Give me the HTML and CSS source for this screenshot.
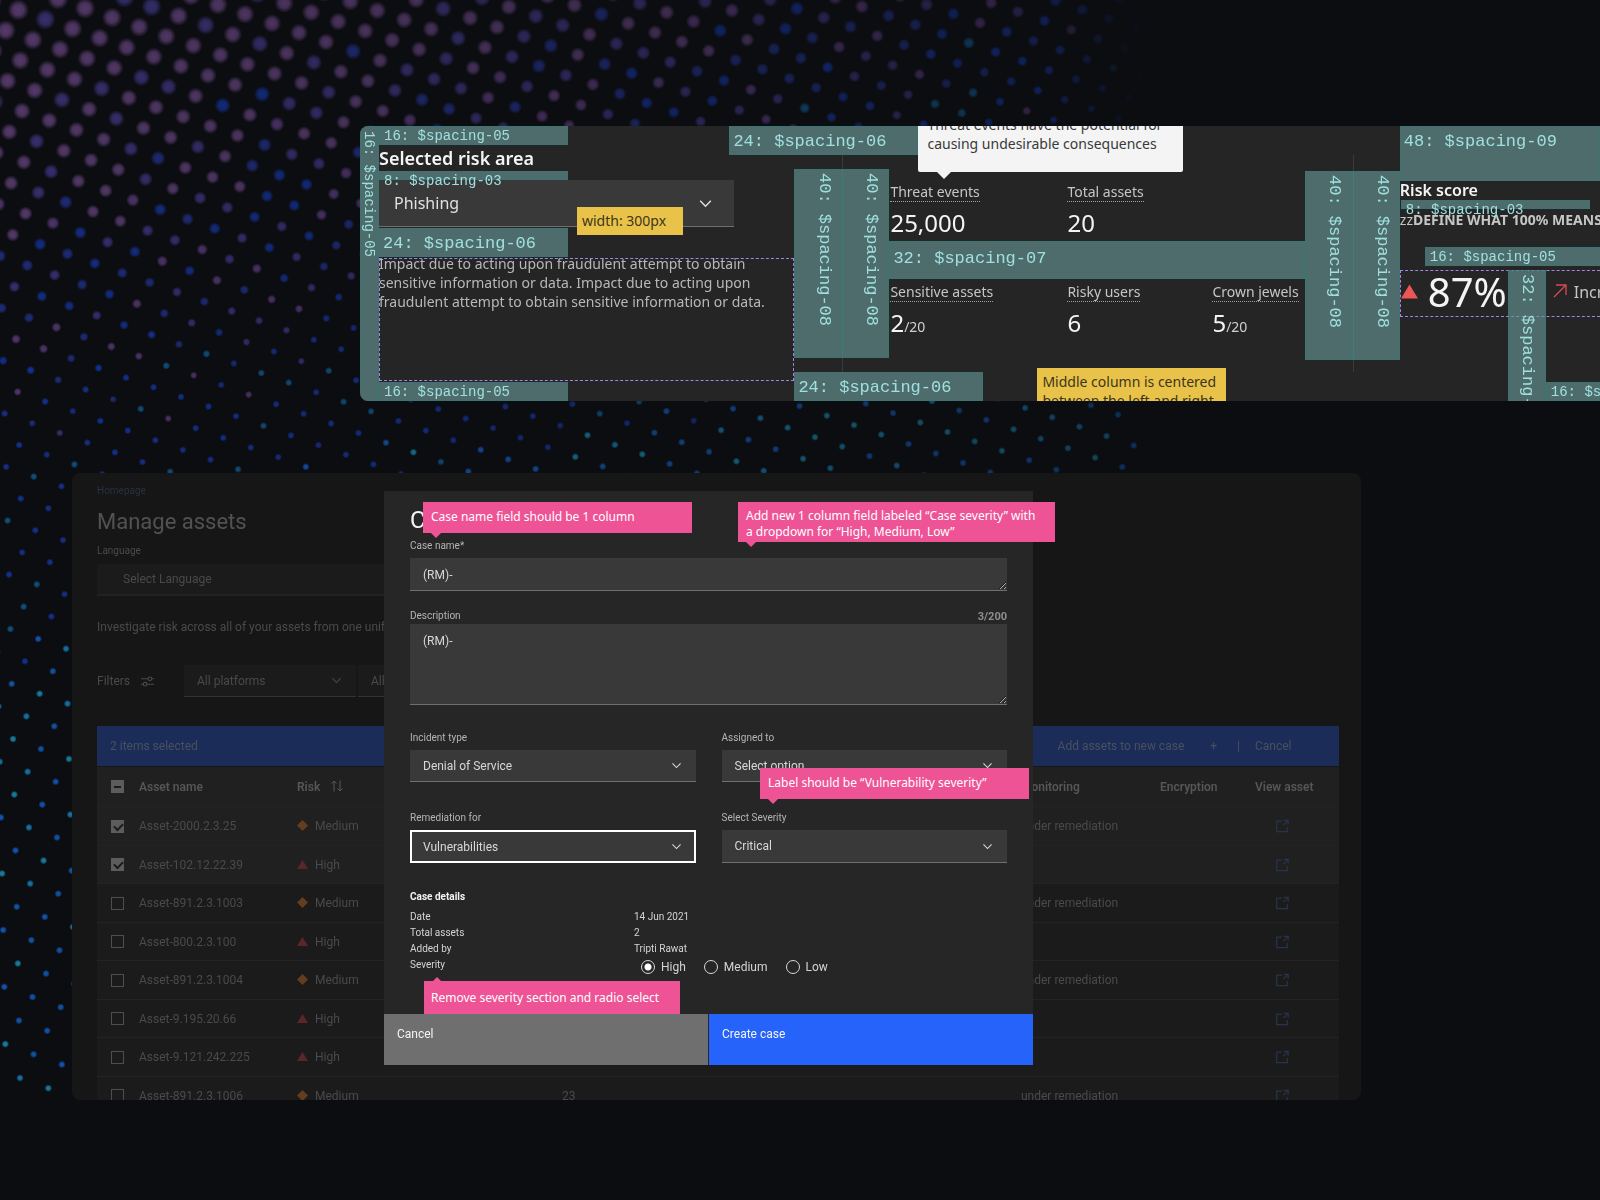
FILE: index.html
```html
<!DOCTYPE html>
<html lang="en">
<head>
<meta charset="utf-8">
<title>Risk dashboard review</title>
<link rel="stylesheet" href="styles.css">
</head>
<body>
<canvas class="dots" id="dots" aria-hidden="true"></canvas>

<svg class="sprite" aria-hidden="true">
  <symbol id="chevron" viewBox="0 0 16 16"><path d="M3 5.5 8 10.5 13 5.5" fill="none" stroke="currentColor" stroke-width="1.4"/></symbol>
  <symbol id="launch" viewBox="0 0 16 16"><path d="M8 2.5H2v12h12V9M10 1.500h5v5M15 1.500 9.500 7" fill="none" stroke="currentColor" stroke-width="1.4"/></symbol>
  <symbol id="diamond" viewBox="0 0 12 12"><path d="M6 0 12 6 6 12 0 6Z" fill="currentColor"/></symbol>
  <symbol id="triangle" viewBox="0 0 12 12"><path d="M6 1 12 11H0Z" fill="currentColor"/></symbol>
</svg>

<main class="page">
  <section class="spec" aria-label="Spacing specification">
    <div class="space rail">16: $spacing-05</div>

    <div class="risk-area">
      <div class="space s16">16: $spacing-05</div>
      <h2 class="area-title">Selected risk area</h2>
      <div class="space s8">8: $spacing-03</div>
      <div class="dropdown big">
        <select aria-label="Risk area"><option>Phishing</option></select>
        <svg class="chev"><use href="#chevron"/></svg>
        <span class="note width-note">width: 300px</span>
      </div>
      <div class="space s24">24: $spacing-06</div>
      <p class="impact">Impact due to acting upon fraudulent attempt to obtain<br>sensitive information or data. Impact due to acting upon<br>fraudulent attempt to obtain sensitive information or data.</p>
      <div class="space s16">16: $spacing-05</div>
    </div>

    <div class="gutter">
      <div class="space s24 over-left">24: $spacing-06</div>
      <div class="pair">
        <div class="space s40">40: $spacing-08</div>
        <div class="space s40">40: $spacing-08</div>
      </div>
      <div class="space s24 wide">24: $spacing-06</div>
    </div>

    <div class="metrics">
      <div class="tooltip" role="tooltip">Threat events have the potential for<br>causing undesirable consequences</div>
      <dl class="stats">
        <div><dt><span>Threat events</span></dt><dd>25,000</dd></div>
        <div><dt><span>Total assets</span></dt><dd>20</dd></div>
      </dl>
      <div class="space s32">32: $spacing-07</div>
      <dl class="stats">
        <div><dt><span>Sensitive assets</span></dt><dd>2<small>/20</small></dd></div>
        <div><dt><span>Risky users</span></dt><dd>6</dd></div>
        <div><dt><span>Crown jewels</span></dt><dd>5<small>/20</small></dd></div>
      </dl>
      <p class="note column-note">Middle column is centered<br>between the left and right</p>
    </div>

    <div class="gutter second">
      <div class="pair">
        <div class="space s40">40: $spacing-08</div>
        <div class="space s40">40: $spacing-08</div>
      </div>
    </div>

    <div class="score">
      <div class="space s48">48: $spacing-09</div>
      <h2 class="score-title">Risk score</h2>
      <div class="space s8">8: $spacing-03</div>
      <p class="define">zz<b>DEFINE WHAT 100% MEANS</b></p>
      <div class="space s16 indent">16: $spacing-05</div>
      <div class="score-row">
        <svg class="alert"><use href="#triangle"/></svg>
        <strong class="percent">87%</strong>
        <svg class="trend" viewBox="0 0 14 14"><path d="M1 13 12.500 1.500M3 1h10v10" fill="none" stroke="currentColor" stroke-width="1.300"/></svg>
        <span class="trend-text">Increased</span>
        <div class="space s32v">32: $spacing-07</div>
      </div>
      <div class="space s16 last">16: $spacing-05</div>
    </div>
  </section>

  <section class="window" aria-label="Manage assets">
    <div class="assets">
      <a class="crumb" href="#">Homepage</a>
      <h1 class="assets-title">Manage assets</h1>
      <label class="lang-label" for="lang">Language</label>
      <div class="dropdown lang"><select id="lang"><option>Select Language</option></select></div>
      <p class="intro">Investigate risk across all of your assets from one unified view</p>
      <div class="filters">
        <span class="filters-label">Filters</span>
        <svg class="sliders" viewBox="0 0 12 12"><g fill="none" stroke="currentColor"><path d="M0 3.500H6.500M10 3.500H12M0 8.500H2M5.500 8.500H12"/><circle cx="8.200" cy="3.500" r="1.700"/><circle cx="3.800" cy="8.500" r="1.700"/></g></svg>
        <div class="dropdown filter"><select aria-label="Platforms"><option>All platforms</option></select><svg class="chev"><use href="#chevron"/></svg></div>
        <div class="dropdown filter"><select aria-label="More filters"><option>All</option></select></div>
      </div>
      <div class="batch">
        <span class="batch-count">2 items selected</span>
        <button type="button">Add assets to new case</button>
        <span class="plus">+</span>
        <span class="bar">|</span>
        <button type="button">Cancel</button>
      </div>
      <table class="asset-table">
        <colgroup><col class="c-check"><col class="c-name"><col class="c-risk"><col><col class="c-mon"><col class="c-enc"><col class="c-view"></colgroup>
        <thead>
          <tr>
            <th><input type="checkbox" class="some" aria-label="Select all"></th>
            <th>Asset name</th>
            <th>Risk <svg class="sort" viewBox="0 0 12 12"><path d="M3 11.500V1M.5 3.500 3 1 5.500 3.500M9 .5V11M6.500 8.500 9 11 11.500 8.500" fill="none" stroke="currentColor"/></svg></th>
            <th></th><th>Monitoring</th><th>Encryption</th><th>View asset</th>
          </tr>
        </thead>
        <tbody>
          <tr class="picked"><td><input type="checkbox" checked aria-label="Asset-2000.2.3.25"></td><td>Asset-2000.2.3.25</td><td class="medium"><svg><use href="#diamond"/></svg>Medium</td><td></td><td>under remediation</td><td></td><td><a href="#" aria-label="View asset"><svg><use href="#launch"/></svg></a></td></tr>
          <tr class="picked"><td><input type="checkbox" checked aria-label="Asset-102.12.22.39"></td><td>Asset-102.12.22.39</td><td class="high"><svg><use href="#triangle"/></svg>High</td><td></td><td></td><td></td><td><a href="#" aria-label="View asset"><svg><use href="#launch"/></svg></a></td></tr>
          <tr><td><input type="checkbox" aria-label="Asset-891.2.3.1003"></td><td>Asset-891.2.3.1003</td><td class="medium"><svg><use href="#diamond"/></svg>Medium</td><td></td><td>under remediation</td><td></td><td><a href="#" aria-label="View asset"><svg><use href="#launch"/></svg></a></td></tr>
          <tr><td><input type="checkbox" aria-label="Asset-800.2.3.100"></td><td>Asset-800.2.3.100</td><td class="high"><svg><use href="#triangle"/></svg>High</td><td></td><td></td><td></td><td><a href="#" aria-label="View asset"><svg><use href="#launch"/></svg></a></td></tr>
          <tr><td><input type="checkbox" aria-label="Asset-891.2.3.1004"></td><td>Asset-891.2.3.1004</td><td class="medium"><svg><use href="#diamond"/></svg>Medium</td><td></td><td>under remediation</td><td></td><td><a href="#" aria-label="View asset"><svg><use href="#launch"/></svg></a></td></tr>
          <tr><td><input type="checkbox" aria-label="Asset-9.195.20.66"></td><td>Asset-9.195.20.66</td><td class="high"><svg><use href="#triangle"/></svg>High</td><td></td><td></td><td></td><td><a href="#" aria-label="View asset"><svg><use href="#launch"/></svg></a></td></tr>
          <tr><td><input type="checkbox" aria-label="Asset-9.121.242.225"></td><td>Asset-9.121.242.225</td><td class="high"><svg><use href="#triangle"/></svg>High</td><td></td><td></td><td></td><td><a href="#" aria-label="View asset"><svg><use href="#launch"/></svg></a></td></tr>
          <tr><td><input type="checkbox" aria-label="Asset-891.2.3.1006"></td><td>Asset-891.2.3.1006</td><td class="medium"><svg><use href="#diamond"/></svg>Medium</td><td>23</td><td>under remediation</td><td></td><td><a href="#" aria-label="View asset"><svg><use href="#launch"/></svg></a></td></tr>
        </tbody>
      </table>
    </div>

    <div class="overlay">
      <form class="modal" role="dialog" aria-label="Create case">
        <div class="modal-body">
          <h2 class="modal-title">Create case</h2>
          <label class="label" for="case-name">Case name*</label>
          <textarea id="case-name" class="area short">(RM)-</textarea>
          <div class="label-row"><label class="label" for="desc">Description</label><span class="counter">3/200</span></div>
          <textarea id="desc" class="area tall">(RM)-</textarea>
          <div class="fields">
            <div class="field">
              <label class="label" for="incident">Incident type</label>
              <div class="dropdown"><select id="incident"><option>Denial of Service</option></select><svg class="chev"><use href="#chevron"/></svg></div>
            </div>
            <div class="field">
              <label class="label" for="assigned">Assigned to</label>
              <div class="dropdown"><select id="assigned"><option>Select option</option></select><svg class="chev"><use href="#chevron"/></svg></div>
            </div>
            <div class="field">
              <label class="label" for="remed">Remediation for</label>
              <div class="dropdown focused"><select id="remed"><option>Vulnerabilities</option></select><svg class="chev"><use href="#chevron"/></svg></div>
            </div>
            <div class="field">
              <label class="label" for="sev">Select Severity</label>
              <div class="dropdown"><select id="sev"><option>Critical</option></select><svg class="chev"><use href="#chevron"/></svg></div>
            </div>
          </div>
          <h3 class="details-title">Case details</h3>
          <dl class="details">
            <dt>Date</dt><dd>14 Jun 2021</dd>
            <dt>Total assets</dt><dd>2</dd>
            <dt>Added by</dt><dd>Tripti Rawat</dd>
            <dt>Severity</dt>
            <dd class="radios">
              <label><input type="radio" name="s" checked>High</label>
              <label><input type="radio" name="s">Medium</label>
              <label><input type="radio" name="s">Low</label>
            </dd>
          </dl>
        </div>
        <div class="actions">
          <button type="button" class="cancel">Cancel</button>
          <button type="button" class="create">Create case</button>
        </div>
        <p class="callout one">Case name field should be 1 column</p>
        <p class="callout two">Add new 1 column field labeled “Case severity” with<br>a dropdown for “High, Medium, Low”</p>
        <p class="callout three">Label should be “Vulnerability severity”</p>
        <p class="callout four">Remove severity section and radio select</p>
      </form>
    </div>
  </section>
</main>
<script src="script.js"></script>
</body>
</html>
```
FILE: styles.css
```css
* { box-sizing: border-box; }
body {
  margin: 0;
  min-height: 100vh;
  background: #0c0d11;
  color: #f4f4f4;
  font: 12px/16px "Noto Sans", sans-serif;
  overflow-x: hidden;
}
h1, h2, h3, p, dl, dd { margin: 0; }
button, select, textarea { font: inherit; color: inherit; }
.sprite { display: none; }
.dots { position: absolute; left: 0; top: 0; z-index: -1; }
.page { padding-top: 126px; }

/* spacing blocks */
.space {
  flex: none;
  padding-left: 4px;
  background: rgba(102, 146, 146, .65);
  border: 1px dotted rgba(30, 130, 130, .7);
  color: #9fe0de;
  font-family: "Liberation Mono", monospace;
  font-size: 14px;
  line-height: 18px;
  white-space: nowrap;
}
.s16, .s24, .s8 { width: 189px; }
.s16 { height: 19px; }
.s8 { height: 9px; position: relative; z-index: 1; }
.s24, .s32, .s48 { padding-left: 3px; font-size: 17px; }
.s24 { height: 29px; line-height: 29px; }

.spec {
  display: flex;
  height: 275px;
  margin-left: 360px;
  border-radius: 8px 0 0 8px;
  background: #252525;
  overflow: hidden;
}
.rail, .s40, .s32v { writing-mode: vertical-rl; padding: 4px 0 0; }
.rail { width: 19px; }
.risk-area { display: flex; flex-direction: column; flex: 415 0 0; min-width: 0; }
.area-title { font-size: 18px; line-height: 26px; font-weight: 600; white-space: nowrap; }
.risk-area .s24 { margin-top: 1px; }

.dropdown {
  position: relative;
  display: flex;
  align-items: center;
  height: 32px;
  background: #393939;
  border-bottom: 1px solid #6f6f6f;
}
.dropdown select {
  appearance: none;
  width: 100%;
  height: 100%;
  padding: 0 13px;
  border: 0;
  background: none;
  outline: 0;
}
.chev { position: absolute; right: 13px; width: 13px; height: 13px; pointer-events: none; }
.big { width: 355px; height: 47px; flex: none; font-size: 16px; line-height: 24px; color: #e0e0e0; }
.big select { padding: 0 15px; }
.big .chev { right: 20px; width: 17px; height: 17px; }
.note { background: #e9c349; color: #3d351d; font-size: 14px; padding: 4px 5px; line-height: 20px; white-space: nowrap; }
.width-note { position: absolute; left: 198px; top: 27px; width: 106px; z-index: 1; }
.impact {
  position: relative;
  height: 127px;
  flex: none;
  margin: -3px 0 1px;
  color: #b8b8b8;
  font-size: 14px;
  line-height: 19px;
  white-space: nowrap;
}
.impact::before { content: ""; position: absolute; inset: 4px 0 0; border: 1px dashed #a583e6; }

.gutter { position: relative; flex: none; width: 95px; padding-top: 43px; background: linear-gradient(#3a3a3a, #3a3a3a) 48px 29px / 1px 217px no-repeat; }
.pair { display: flex; height: 189px; }
.s40 { flex: 1; padding: 3px 7px 0 0; font-size: 17px; line-height: 19px; }
.over-left { position: absolute; left: -65px; top: 0; }
.wide { margin-top: 14px; }
.second { padding-top: 45px; }

.metrics { position: relative; flex: 415 0 0; min-width: 0; padding-top: 55px; }
.tooltip {
  position: absolute;
  left: 29px;
  top: -11px;
  width: 265px;
  height: 57px;
  padding: 0 9px;
  border-radius: 0 0 2px 2px;
  background: #f4f4f4;
  color: #393939;
  font-size: 14px;
  line-height: 19px;
  white-space: nowrap;
}
.tooltip::after { content: ""; position: absolute; left: 19px; top: 57px; border: 7px solid transparent; border-top-color: #f4f4f4; border-bottom: 0; }
.stats { display: grid; grid-template-columns: 177px 145px 1fr; padding-left: 1px; }
.stats dt { font-size: 14px; line-height: 21px; height: 21px; color: #c6c6c6; white-space: nowrap; }
.stats dt span { display: inline-block; height: 21px; border-bottom: 1px dotted #a0a0a0; }
.stats dd { font-size: 24px; line-height: 32px; height: 39px; padding-top: 5px; color: #f4f4f4; }
.stats small { font-size: 14px; color: #d0d0d0; }
.s32 { height: 38px; line-height: 34px; margin-bottom: 2px; }
.column-note { position: absolute; left: 148px; top: 242px; width: 189px; height: 48px; line-height: 19px; }

.score { position: relative; flex: 200 0 0; min-width: 0; overflow: hidden; }
.s48 { height: 55px; line-height: 29px; }
.score-title { font-size: 16px; line-height: 19px; font-weight: 600; }
.score .s8 { margin-left: 1px; }
.define { font-size: 14px; line-height: 22px; height: 38px; color: #c6c6c6; white-space: nowrap; }
.indent { margin-left: 25px; }
.score-row {
  position: relative;
  display: flex;
  align-items: center;
  height: 47px;
  margin-top: 4px;
  border: 1px dashed #a583e6;
  border-right: 0;
  white-space: nowrap;
}
.alert { width: 17px; height: 17px; margin-bottom: 5px; color: #ee5557; flex: none; }
.percent { width: 135px; padding: 0 0 4px 10px; font-size: 40px; line-height: 45px; font-weight: 400; flex: none; }
.trend { width: 14px; height: 14px; margin-bottom: 5px; color: #da4a50; flex: none; }
.trend-text { margin-left: 7px; padding-bottom: 4px; font-size: 16px; color: #c6c6c6; }
.s32v { position: absolute; left: 107px; top: -1px; width: 38px; height: 140px; padding: 3px 8px 0 0; font-size: 17px; line-height: 19px; }
.last { margin: 65px 0 0 146px; }

/* application window */
.window {
  position: relative;
  height: 627px;
  margin: 72px 239px 0 72px;
  border-radius: 8px;
  background: #161616;
  overflow: hidden;
  font-family: Roboto, sans-serif;
}
.assets { padding: 10px 22px 0 25px; color: #4a4a4a; }
.assets .dropdown { background: #1b1b1b; border-color: #333; }
.crumb { display: block; color: #283142; text-decoration: none; font-size: 10px; }
.assets-title { margin-top: 7px; font-size: 22px; line-height: 32px; font-weight: 400; color: #525252; }
.lang-label { display: block; margin-top: 5px; font-size: 10px; }
.assets .lang { width: 50%; margin-top: 5px; height: 32px; border-bottom: 2px solid #222; }
.lang select { padding-left: 26px; }
.intro { margin-top: 23px; }
.filters { display: flex; align-items: center; height: 32px; margin-top: 30px; }
.filters-label { width: 44px; }
.sliders { width: 13px; height: 13px; margin-right: 30px; }
.filter { width: 172px; margin-right: 2px; }
.batch { display: flex; align-items: center; height: 40px; margin: 29px 0 1px; padding: 0 49px 0 13px; background: #1a2c57; color: #49515f; }
.batch button { padding: 0; border: 0; background: none; }
.batch button:last-child { width: 35px; text-align: left; white-space: nowrap; }
.batch-count { flex: 1; }
.plus { margin: 0 20px 0 26px; }
.bar { margin-right: 15px; }

.asset-table { width: 100%; table-layout: fixed; border-collapse: collapse; background: #1b1b1b; }
.asset-table tr { height: 39px; border-bottom: 1px solid #232323; }
.asset-table tbody tr:nth-child(even) { height: 38px; }
.asset-table thead, .picked { background: #202020; }
.asset-table th { color: #565656; font-weight: 600; }
.asset-table th, .asset-table td { padding: 1px 0 0; text-align: left; white-space: nowrap; }
.asset-table input {
  appearance: none;
  display: block;
  position: relative;
  width: 13px;
  height: 13px;
  margin: 0 0 0 14px;
  border: 1px solid #4e4e4e;
}
.asset-table input:checked, .asset-table .some { background: #5c5c5c; border-color: #5c5c5c; }
.asset-table input:checked::after { content: ""; position: absolute; left: 2px; top: 2px; width: 7px; height: 4px; border: solid #1b1b1b; border-width: 0 0 2px 2px; transform: rotate(-45deg); }
.asset-table .some::after { content: ""; position: absolute; left: 2px; top: 5px; width: 7px; height: 2px; background: #1b1b1b; }
.asset-table svg { width: 11px; height: 11px; vertical-align: -1px; }
.asset-table .sort { margin-left: 8px; width: 12px; height: 12px; }
td.medium svg, td.high svg { margin-right: 7px; }
td.medium svg { color: #643c1e; }
td.high svg { color: #5c2628; }
.asset-table a { display: block; margin-left: 20px; height: 14px; line-height: 14px; color: #27354c; }
.asset-table a svg { display: block; width: 14px; height: 14px; }
.c-check { width: 42px; }
.c-name { width: 158px; }
.c-risk { width: 265px; }
.c-mon { width: 139px; }
.c-enc { width: 95px; }
.c-view { width: 84px; }

/* dialog */
.overlay { position: absolute; inset: 18px 328px auto 312px; }
.modal { position: relative; background: #262626; }
.modal-body { height: 523px; padding: 11px 26px 0; }
.modal-title { font-size: 24px; line-height: 36px; font-weight: 400; }
.label { display: block; font-size: 10px; color: #b4b4b4; }
.area {
  display: block;
  width: 100%;
  padding: 9px 13px;
  border: 0;
  border-bottom: 1px solid #6f6f6f;
  background: #393939;
  color: #d8d8d8;
  outline: 0;
  overflow: hidden;
}
.short { height: 33px; margin-top: 4px; }
.tall { height: 81px; }
.label-row { display: flex; justify-content: space-between; margin-top: 17px; height: 16px; }
.counter { font-size: 11px; line-height: 18px; font-weight: 700; color: #8d8d8d; }
.fields { display: grid; grid-template-columns: 1fr 1fr; gap: 28px 26px; margin-top: 25px; color: #d8d8d8; }
.fields .dropdown { margin-top: 4px; }
.field + .field + .field .dropdown { height: 33px; }
.field .dropdown.focused { border: 2px solid #fff; }
.focused select { padding: 0 11px; }
.focused .chev { right: 11px; }
.details-title { margin-top: 26px; font-size: 10px; font-weight: 700; }
.details { display: grid; grid-template-columns: 224px 1fr; margin-top: 4px; font-size: 10px; color: #d4d4d4; }
.radios { display: flex; gap: 18px; padding-left: 7px; }
.radios label { display: flex; align-items: center; gap: 6px; height: 19px; font-size: 12px; }
.radios input { appearance: none; width: 14px; height: 14px; margin: 0; border: 1px solid #d8d8d8; border-radius: 50%; }
.radios input:checked { background: radial-gradient(#fff 3px, transparent 4px); }
.actions { display: grid; grid-template-columns: 1fr 1fr; gap: 1px; }
.actions button { height: 51px; padding: 0 13px 12px; border: 0; text-align: left; color: #f4f4f4; }
.cancel { background: #6f6f6f; }
.create { background: #2563fa; }

.callout {
  position: absolute;
  padding: 7px 8px;
  height: 31px;
  width: 269px;
  background: #ee5396;
  color: #fff;
  font-family: "Noto Sans", sans-serif;
  font-size: 12px;
  white-space: nowrap;
}
.callout::after { content: ""; position: absolute; left: 8px; top: 100%; border: 5px solid transparent; border-top-color: #ee5396; border-bottom: 0; }
.one { left: 39px; top: 11px; }
.two { left: 354px; top: 11px; width: 317px; height: 40px; padding-top: 6px; }
.three { left: 376px; top: 277px; }
.four { left: 40px; top: 490px; width: 256px; height: 33px; padding: 9px 7px; }
.four::after { top: -4px; border: 5px solid transparent; border-bottom-color: #ee5396; border-top: 0; }
```
FILE: script.js
```js
// Draws the halftone field behind the panels: a slanted lattice of soft dots
// that widens, shrinks and shifts from purple to cyan down the page.
const canvas = document.getElementById("dots");
canvas.width = 1142;
canvas.height = 1100;
const ctx = canvas.getContext("2d");
const bands = [
  [[98, 66, 122], [98, 66, 122], [98, 66, 122], [62, 54, 128]],
  [[92, 60, 126], [34, 50, 140], [20, 52, 156], [62, 54, 132]],
  [[18, 58, 176], [26, 54, 160], [24, 56, 170], [16, 96, 150]],
  [[20, 98, 210], [22, 138, 200], [26, 150, 190], [18, 100, 200]]
];
const noise = (i, j) => {
  const v = Math.sin(i * 12.9898 + j * 78.233) * 43758.5453;
  return v - Math.floor(v);
};
for (let j = -30; j < 50; j++) {
  for (let i = -30; i < 80; i++) {
    const x = 18.3 + 27.1 * i - 12.6 * j + 0.03 * i * j - 0.02 * j * j;
    const y = 10 + 9.35 * i + 20.4 * j + 0.022 * i * j + 0.036 * j * j;
    if (x < -12 || x > 1150 || y < -12 || y > 1090) continue;
    const level = Math.min(3.99, Math.max(0, y / 190 + x / 520 - 0.3 + noise(j, i) * 0.8 - 0.4));
    const set = bands[Math.floor(Math.min(level, y > 400 ? 3.99 : 2.99))];
    const c = set[Math.floor(noise(i, j) * 4)];
    const r = Math.max(3.8, 11 - x / 240 - y / 58);
    const edge = y > 380 ? 1 : Math.min(1, (1150 - x) / 110);
    const fade = edge * (0.86 - x / 2600);
    const g = ctx.createRadialGradient(x, y, 0, x, y, r);
    g.addColorStop(0, `rgba(${c},${fade})`);
    g.addColorStop(0.5, `rgba(${c},${fade * 0.85})`);
    g.addColorStop(1, `rgba(${c},0)`);
    ctx.fillStyle = g;
    ctx.beginPath();
    ctx.arc(x, y, r, 0, 7);
    ctx.fill();
  }
}
```
